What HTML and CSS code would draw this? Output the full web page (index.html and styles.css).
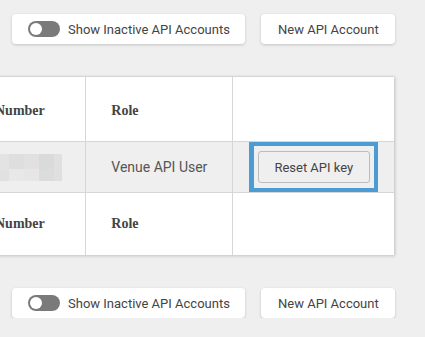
FILE: index.html
```html
<!DOCTYPE html>
<html lang="en">
<head>
    <meta charset="UTF-8">
    <meta name="viewport" content="width=device-width, initial-scale=1.0">
    <title>API Accounts</title>
    <link rel="stylesheet" href="styles.css">
</head>
<body>
    <div class="toolbar">
        <button class="card-btn toggle-btn">
            <span class="switch"><span class="knob"></span></span>
            Show Inactive API Accounts
        </button>
        <button class="card-btn">New API Account</button>
    </div>

    <div class="table-wrap">
        <table class="accounts">
            <thead>
                <tr>
                    <th class="col-num">Number</th>
                    <th class="col-role">Role</th>
                    <th class="col-act"></th>
                </tr>
            </thead>
            <tbody>
                <tr class="row">
                    <td class="col-num">
                        <div class="blur">
                            <span class="b1"></span><span class="b2"></span><span class="b3"></span><span class="b4"></span><span class="b5"></span>
                            <span class="b6"></span><span class="b7"></span><span class="b8"></span><span class="b9"></span><span class="b10"></span>
                        </div>
                    </td>
                    <td class="col-role">Venue API User</td>
                    <td class="col-act">
                        <div class="focus-box">
                            <button class="reset-btn">Reset API key</button>
                        </div>
                    </td>
                </tr>
            </tbody>
            <tfoot>
                <tr>
                    <th class="col-num">Number</th>
                    <th class="col-role">Role</th>
                    <th class="col-act"></th>
                </tr>
            </tfoot>
        </table>
    </div>

    <div class="toolbar bottom">
        <button class="card-btn toggle-btn">
            <span class="switch"><span class="knob"></span></span>
            Show Inactive API Accounts
        </button>
        <button class="card-btn">New API Account</button>
    </div>
</body>
</html>
```

FILE: styles.css
```css
body {
    margin: 0;
    background-color: #efefef;
    font-family: Roboto, "Liberation Sans", sans-serif;
    overflow: hidden;
}
.toolbar {
    display: flex;
    gap: 16px;
    padding-left: 12px;
    margin-top: 14px;
}
.toolbar.bottom {
    margin-top: 33px;
}
.card-btn {
    height: 30px;
    display: flex;
    align-items: center;
    gap: 8px;
    padding: 0 16px 0 17px;
    background: #fff;
    border: none;
    border-radius: 4px;
    box-shadow: 0 1px 3px rgba(0,0,0,0.18);
    font-family: Roboto, sans-serif;
    font-size: 13px;
    color: #444;
    white-space: nowrap;
}
.toggle-btn {
    padding-left: 16px;
    width: 233px;
}
.switch {
    flex: none;
    width: 32px;
    height: 16px;
    border-radius: 8px;
    background: #7a7a7a;
    display: flex;
    align-items: center;
    padding-left: 2px;
    box-sizing: border-box;
}
.knob {
    width: 12px;
    height: 12px;
    border-radius: 50%;
    background: #fff;
}
.table-wrap {
    margin-top: 32px;
    margin-left: -30px;
    width: 424px;
    background: #fff;
    box-shadow: 1px 1px 3px rgba(0,0,0,0.2);
}
.accounts {
    width: 424px;
    table-layout: fixed;
    border-collapse: collapse;
    border-top: 1px solid #d6d6d6;
}
.accounts th, .accounts td {
    border-right: 1px solid #d6d6d6;
    text-align: left;
    padding: 0 0 0 25px;
    white-space: nowrap;
}
.accounts th:last-child, .accounts td:last-child {
    border-right: none;
}
.accounts th {
    font-family: "Liberation Serif", serif;
    font-weight: bold;
    font-size: 14px;
    color: #444;
}
.accounts thead th {
    height: 61px;
    padding-top: 3px;
}
.accounts tfoot th {
    height: 62px;
    border-top: 1px solid #d6d6d6;
}
.accounts .col-num { width: 90px; }
.accounts .col-role { width: 120px; }
.accounts .col-act { width: 136px; }
.row {
    background: #efefef;
    border-top: 1px solid #d6d6d6;
}
.row td {
    height: 50px;
    font-size: 14px;
    color: #555;
}
.accounts .row td.col-num {
    padding-left: 30px;
    width: 85px;
}
.blur {
    display: grid;
    grid-template-columns: 9px 15px 15px 15px 8px;
    grid-template-rows: 15px 12px;
    width: 62px;
}
.b1 { background: #e3e3e3; }
.b2 { background: #dedede; }
.b3 { background: #e2e1df; }
.b4 { background: #d9dbda; }
.b5 { background: #e0e0e0; }
.b6 { background: #e1e1e1; }
.b7 { background: #e8e8e8; }
.b8 { background: #e6e6e6; }
.b9 { background: #dcdcdc; }
.b10 { background: #dfdfdf; }
.accounts .row td.col-act {
    padding: 0 16px;
    width: 129px;
}
.focus-box {
    border: 4px solid #4b9cd3;
    border-left-width: 5px;
    height: 42px;
    display: flex;
    align-items: center;
    padding: 0 4px;
}
.reset-btn {
    width: 113px;
    height: 32px;
    background: #efefef;
    border: 1px solid #bcbcbc;
    border-radius: 3px;
    font-family: Roboto, sans-serif;
    font-size: 13px;
    color: #444;
}
```
